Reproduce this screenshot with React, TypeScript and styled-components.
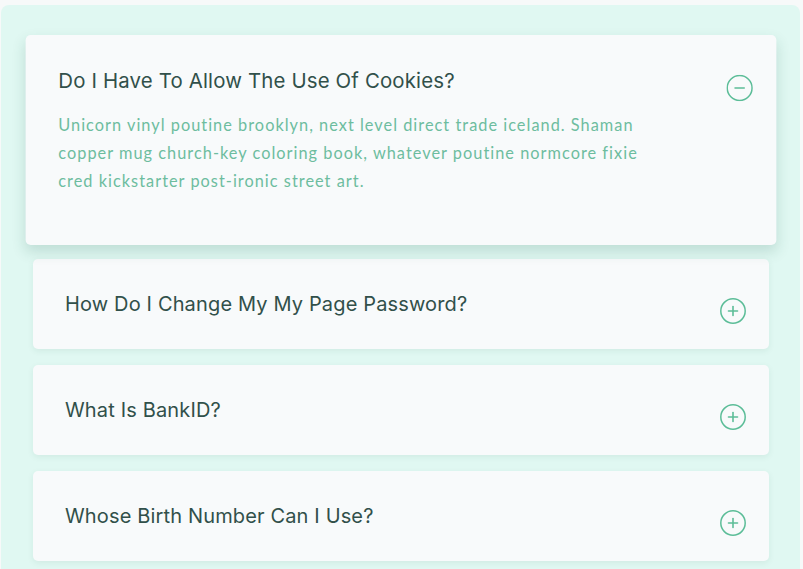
import React, { useState } from "react";
import styled, { createGlobalStyle, css } from "styled-components";

const GlobalStyle = createGlobalStyle`
  html, body {
    margin: 0;
    padding: 0;
    background: #f7f9f9;
  }
  * { box-sizing: border-box; }
`;

const Section = styled.section`
  margin: 5px 3px 0 1px;
  padding: 32px 31px 30px 32px;
  background: #e0f8f2;
  border-radius: 8px;
  display: flex;
  flex-direction: column;
  gap: 16px;
  min-height: 600px;
`;

const Card = styled.div<{ $open: boolean }>`
  background: #f8fafb;
  border-radius: 5px;
  padding: 30px 23px 30px 32px;
  box-shadow: 0 2px 6px rgba(20, 90, 70, 0.08);
  ${(p) =>
    p.$open &&
    css`
      transform: scale(1.02);
      box-shadow: 0 6px 14px rgba(20, 90, 70, 0.16);
    `}
`;

const Header = styled.div`
  display: flex;
  justify-content: space-between;
  align-items: flex-start;
  cursor: pointer;
`;

const Title = styled.h3`
  margin: 0;
  padding-top: 1px;
  font-family: "Inter", "Noto Sans", sans-serif;
  font-weight: 400;
  font-size: 20px;
  line-height: 29px;
  letter-spacing: 0.15px;
  color: #31504a;
`;

const IconWrap = styled.span`
  display: block;
  width: 26px;
  height: 26px;
  margin-top: 9px;
  margin-bottom: -5px;
  flex-shrink: 0;
`;

const Body = styled.p`
  margin: 14px 0 19px;
  max-width: 580px;
  font-family: "Lato", sans-serif;
  font-size: 16px;
  line-height: 27.5px;
  letter-spacing: 1px;
  color: #6dbd9f;
`;

const ToggleIcon = ({ open }: { open: boolean }) => (
  <svg width="26" height="26" viewBox="0 0 26 26" fill="none">
    <circle cx="13" cy="13" r="12.2" stroke="#5cbd98" strokeWidth="1.5" />
    <line x1="8.5" y1="13" x2="17.5" y2="13" stroke="#5cbd98" strokeWidth="1.6" strokeLinecap="round" />
    {!open && (
      <line x1="13" y1="8.5" x2="13" y2="17.5" stroke="#5cbd98" strokeWidth="1.6" strokeLinecap="round" />
    )}
  </svg>
);

const answer =
  "Unicorn vinyl poutine brooklyn, next level direct trade iceland. Shaman copper mug church-key coloring book, whatever poutine normcore fixie cred kickstarter post-ironic street art.";

const faqs = [
  { q: "Do I Have To Allow The Use Of Cookies?", a: answer },
  { q: "How Do I Change My My Page Password?", a: answer },
  { q: "What Is BankID?", a: answer },
  { q: "Whose Birth Number Can I Use?", a: answer },
];

export default function App() {
  const [open, setOpen] = useState(0);
  return (
    <>
      <GlobalStyle />
      <Section>
        {faqs.map((f, i) => (
          <Card key={f.q} $open={open === i}>
            <Header onClick={() => setOpen(open === i ? -1 : i)}>
              <Title>{f.q}</Title>
              <IconWrap>
                <ToggleIcon open={open === i} />
              </IconWrap>
            </Header>
            {open === i && <Body>{f.a}</Body>}
          </Card>
        ))}
      </Section>
    </>
  );
}
